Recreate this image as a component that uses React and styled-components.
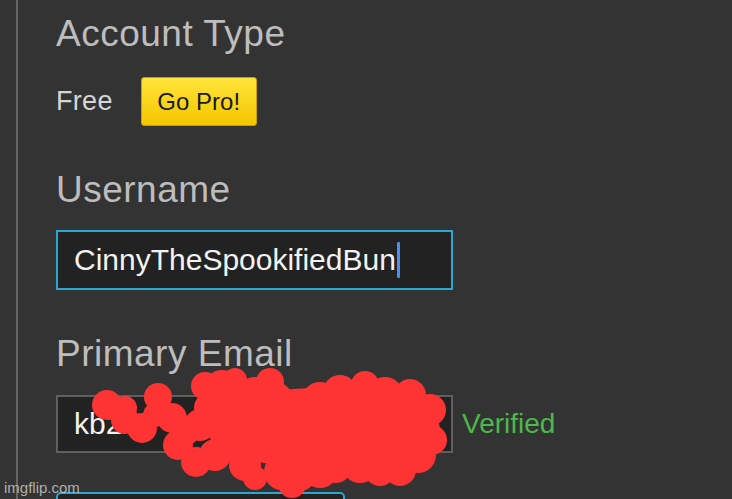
import styled, { createGlobalStyle } from 'styled-components';

const GlobalStyle = createGlobalStyle`
  html, body {
    margin: 0;
    padding: 0;
    background: #333333;
  }
  body {
    font-family: "Liberation Sans", Arial, sans-serif;
    overflow: hidden;
  }
`;

const Page = styled.div`
  position: relative;
  display: flex;
  width: 732px;
  height: 499px;
  overflow: hidden;
  background: #333333;
`;

const Rail = styled.div`
  width: 16px;
  flex: none;
  border-right: 2px solid #656565;
`;

const Content = styled.div`
  padding-left: 38px;
  padding-top: 12px;
  display: flex;
  flex-direction: column;
`;

const Heading = styled.h2`
  margin: 0;
  margin-top: ${(props) => props.gap || 0}px;
  font-family: "Liberation Sans", Arial, sans-serif;
  font-weight: 400;
  font-size: 37px;
  line-height: 44px;
  color: #bdbdbd;
  letter-spacing: 0.5px;
`;

const Row = styled.div`
  display: flex;
  align-items: center;
  margin-top: ${(props) => props.gap || 0}px;
`;

const Plain = styled.span`
  font-size: 27px;
  color: #d6d6d6;
  letter-spacing: 0.3px;
`;

const ProButton = styled.button`
  width: 116px;
  height: 49px;
  border: 1px solid #c99f00;
  border-radius: 3px;
  background: linear-gradient(#ffe539, #f4c500);
  font-family: "Liberation Sans", Arial, sans-serif;
  font-size: 24px;
  color: #1a1a1a;
  padding: 0;
  margin-left: 28px;
`;

const Field = styled.div`
  box-sizing: border-box;
  width: ${(props) => props.w || 397}px;
  height: ${(props) => props.h || 60}px;
  border: 2px solid ${(props) => (props.active ? '#2ba6d3' : '#5f5f5f')};
  background: #222222;
  display: flex;
  align-items: center;
  padding-left: 16px;
  font-size: 30px;
  color: #f2f2f2;
  border-radius: ${(props) => (props.rounded ? '5px 5px 0 0' : '0')};
`;

const Caret = styled.span`
  display: inline-block;
  width: 3px;
  height: 36px;
  background: #4a8ef5;
  border-radius: 1px;
  margin-left: 1px;
`;

const Verified = styled.span`
  font-size: 28px;
  color: #4cb84c;
  margin-left: 9px;
`;

const Scribble = styled.svg`
  position: absolute;
  left: 0;
  top: 0;
`;

const Watermark = styled.span`
  position: absolute;
  left: 4px;
  bottom: 3px;
  font-size: 15px;
  color: rgba(220, 220, 220, 0.75);
`;

const blobs = [
  [107, 405, 15], [125, 420, 14], [142, 428, 15], [158, 397, 14],
  [172, 418, 15], [178, 445, 15], [196, 462, 15], [215, 455, 16],
  [222, 388, 18], [232, 420, 20], [255, 395, 18], [265, 440, 22],
  [282, 472, 18], [292, 484, 14], [300, 455, 20], [290, 410, 20],
  [320, 400, 18], [340, 392, 17], [345, 430, 22], [360, 465, 18],
  [385, 395, 18], [405, 410, 20], [420, 430, 20], [418, 455, 18],
  [400, 470, 16], [380, 470, 16], [335, 465, 18], [245, 465, 16],
  [200, 425, 16], [240, 405, 18], [370, 430, 20], [310, 430, 22],
  [185, 432, 14], [210, 408, 16], [270, 382, 14], [280, 430, 22],
  [330, 415, 20], [360, 400, 18], [390, 440, 20], [430, 410, 16],
  [432, 440, 15], [300, 475, 16], [255, 478, 12], [230, 442, 18],
  [320, 470, 18], [350, 445, 20], [400, 440, 18], [155, 415, 12],
  [125, 408, 12], [205, 386, 14], [275, 400, 18], [365, 385, 14],
  [410, 395, 16], [235, 380, 12],
];

export default function App() {
  return (
    <>
      <GlobalStyle />
      <Page>
        <Rail />
        <Content>
          <Heading>Account Type</Heading>
          <Row gap={21}>
            <Plain>Free</Plain>
            <ProButton>Go Pro!</ProButton>
          </Row>
          <Heading gap={42}>Username</Heading>
          <Row gap={18}>
            <Field active>
              CinnyTheSpookifiedBun
              <Caret />
            </Field>
          </Row>
          <Heading gap={42}>Primary Email</Heading>
          <Row gap={19}>
            <Field h={58}>kb2</Field>
            <Verified>Verified</Verified>
          </Row>
          <Row gap={39}>
            <Field active rounded h={40} w={289} />
          </Row>
        </Content>
        <Scribble width="732" height="499">
          <ellipse cx="318" cy="428" rx="112" ry="40" fill="#fe3334" />
          {blobs.map(([cx, cy, r], i) => (
            <circle key={i} cx={cx} cy={cy} r={r} fill="#fe3334" />
          ))}
        </Scribble>
        <Watermark>imgflip.com</Watermark>
      </Page>
    </>
  );
}
